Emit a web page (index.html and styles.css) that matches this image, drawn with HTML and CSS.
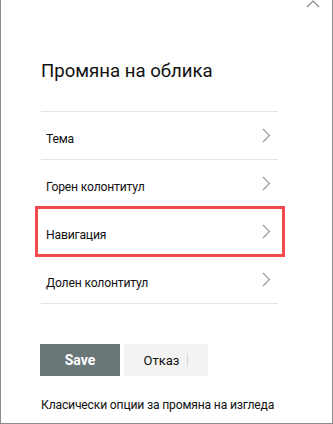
FILE: index.html
```html
<!DOCTYPE html>
<html lang="bg">
<head>
    <meta charset="UTF-8">
    <meta name="viewport" content="width=device-width, initial-scale=1.0">
    <title>Промяна на облика</title>
    <link rel="stylesheet" href="styles.css">
</head>
<body>
    <div class="panel">
        <svg class="collapse" width="14" height="8" viewBox="0 0 14 8">
            <path d="M1 7 L7 1 L13 7" fill="none" stroke="#8a8a8a" stroke-width="1.2"/>
        </svg>

        <h1 class="title">Промяна на облика</h1>

        <ul class="options">
            <li class="option">
                <span class="label">Тема</span>
                <svg class="chevron" width="9" height="15" viewBox="0 0 9 15"><path d="M1 1 L7.5 7.5 L1 14" fill="none" stroke="#9b9b9b" stroke-width="1.2"/></svg>
            </li>
            <li class="option">
                <span class="label">Горен колонтитул</span>
                <svg class="chevron" width="9" height="15" viewBox="0 0 9 15"><path d="M1 1 L7.5 7.5 L1 14" fill="none" stroke="#9b9b9b" stroke-width="1.2"/></svg>
            </li>
            <li class="option">
                <span class="label">Навигация</span>
                <svg class="chevron" width="9" height="15" viewBox="0 0 9 15"><path d="M1 1 L7.5 7.5 L1 14" fill="none" stroke="#9b9b9b" stroke-width="1.2"/></svg>
            </li>
            <li class="option">
                <span class="label">Долен колонтитул</span>
                <svg class="chevron" width="9" height="15" viewBox="0 0 9 15"><path d="M1 1 L7.5 7.5 L1 14" fill="none" stroke="#9b9b9b" stroke-width="1.2"/></svg>
            </li>
        </ul>

        <div class="highlight"></div>

        <div class="actions">
            <button class="btn primary">Save</button>
            <button class="btn secondary">Отказ<span class="caret"></span></button>
        </div>

        <a class="classic" href="#">Класически опции за промяна на изгледа</a>
    </div>
</body>
</html>
```

FILE: styles.css
```css
:root {
    --text: #111111;
    --divider: #e3e3e3;
    --primary: #6a7779;
    --secondary: #f3f3f3;
    --mark: #f24a4c;
}

body {
    margin: 0;
    font-family: Roboto, "Noto Sans", sans-serif;
    color: var(--text);
}

.panel {
    position: relative;
    box-sizing: border-box;
    width: 333px;
    height: 424px;
    padding: 0 54px 0 39px;
    border: 1px solid #8c8c8c;
    border-top: none;
    background: white;
}

.collapse {
    position: absolute;
    top: 0;
    left: 305px;
}

.title {
    margin: 0 0 0 1px;
    padding-top: 59px;
    font-size: 18.6px;
    font-weight: normal;
    line-height: 24px;
}

.options {
    list-style: none;
    margin: 28px 0 0 1px;
    padding: 0;
    border-bottom: 1px solid var(--divider);
}

.option {
    box-sizing: border-box;
    display: flex;
    align-items: center;
    justify-content: space-between;
    height: 48px;
    padding: 0 7px 0 5px;
    border-top: 1px solid var(--divider);
    font-size: 12.2px;
    letter-spacing: -0.2px;
}

.label {
    padding-top: 6px;
}

.highlight {
    position: absolute;
    left: 34px;
    top: 206px;
    width: 250px;
    height: 51px;
    box-sizing: border-box;
    border: 3px solid var(--mark);
}

.actions {
    display: flex;
    gap: 4px;
    margin-top: 40px;
}

.btn {
    height: 32px;
    border: none;
    font-family: inherit;
    font-size: 14px;
    padding: 0;
}

.primary {
    width: 80px;
    background: var(--primary);
    color: white;
    font-weight: bold;
}

.secondary {
    width: 84px;
    background: var(--secondary);
    color: var(--text);
    font-size: 13px;
    display: flex;
    align-items: center;
    justify-content: center;
    gap: 8px;
}

.caret {
    width: 1px;
    height: 12px;
    background: #d8d8d8;
}

.classic {
    display: block;
    margin: 20px 0 0 1px;
    font-size: 12.2px;
    letter-spacing: -0.2px;
    line-height: 18px;
    color: var(--text);
    text-decoration: none;
    white-space: nowrap;
}
```
